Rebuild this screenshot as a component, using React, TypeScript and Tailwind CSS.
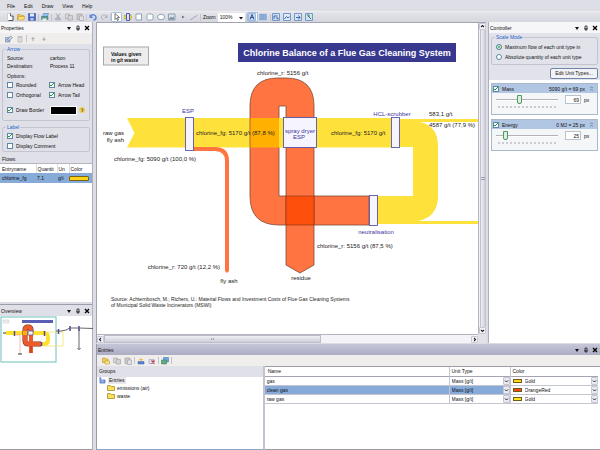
import React from "react";
import type { ReactNode } from "react";

const INK = "#222";

function Icon({ children }: { children: ReactNode }) {
  return (
    <svg viewBox="0 0 16 16" className="block size-[8px]" fill="none" aria-hidden="true">
      {children}
    </svg>
  );
}

const icons = {
  file: <Icon><path d="M3 1h7l4 4v10H3z" fill="#fff" stroke="#a8adbc" /><path d="M9 1v5h5v9H5" stroke="#333" strokeWidth="1.6" /></Icon>,
  open: <Icon><path d="M1 14V3h5l2 2h5v3" fill="#f2c744" stroke="#b08a20" /><path d="M1 14 4 7h12l-3 7z" fill="#ffe07a" stroke="#b08a20" /></Icon>,
  save: <Icon><path d="M1 1h14v14H1z" fill="#4a68c8" stroke="#2c428f" /><path d="M4 1h8v6H4z" fill="#e4ebff" /><path d="M5 10h6v5H5z" fill="#bcc8ec" /></Icon>,
  print: <Icon><path d="M5 1h10l-2 6H3z" fill="#8fc1f0" stroke="#4774a8" /><path d="M1 7h13v6H1z" fill="#5e9c94" stroke="#396b68" /><path d="M3 11h8v4H3z" fill="#e8f5ea" /></Icon>,
  cut: <Icon><path d="m4 1 6 9M12 1 6 10" stroke="#a4a4b0" strokeWidth="2" /><circle cx="5" cy="12" r="2" stroke="#a4a4b0" strokeWidth="2" /><circle cx="11" cy="12" r="2" stroke="#a4a4b0" strokeWidth="2" /></Icon>,
  copy: <Icon><path d="M1 2h8v9H1z" fill="#ddd" stroke="#aaa" strokeWidth="1.5" /><path d="M6 5h9v9H6z" fill="#d2d2d8" stroke="#aaa" strokeWidth="1.5" /></Icon>,
  paste: <Icon><path d="M2 2h10v11H2z" fill="#c8c8ce" stroke="#aaa" strokeWidth="1.5" /><path d="M7 6h8v9H7z" fill="#e2e2e6" stroke="#aaa" strokeWidth="1.5" /></Icon>,
  undo: <Icon><path d="M3 6c4-4 11-3 11 3 0 3-2 5-5 5" stroke="#5b86dd" strokeWidth="3" /><path d="M1 2v8h8z" fill="#5b86dd" /></Icon>,
  redo: <Icon><path d="M13 6C9 2 3 3 3 8c0 3 2 5 4 5" stroke="#b2b2bc" strokeWidth="2" /><path d="M15 3v7H8z" fill="#b2b2bc" /></Icon>,
  pointer: <Icon><path d="m4 1 9 8H9l2 5-2 1-2-5-3 3z" fill="#fff" stroke="#444" strokeWidth="1.4" /></Icon>,
  process: <Icon><path d="M0 5h12V2l4 6-4 6v-3H0z" fill="#eed648" stroke="#a79018" /><path d="M5 1h6v14H5z" fill="#dfe6fb" stroke="#4a5abd" strokeWidth="2" /></Icon>,
  square: <Icon><path d="M2 2h11v12H2z" fill="#fff" stroke="#7892a8" strokeWidth="1.6" /></Icon>,
  rounded: <Icon><rect x="2" y="2" width="12" height="12" rx="3" fill="#fff" stroke="#7892a8" strokeWidth="1.6" /></Icon>,
  ellipse: <Icon><ellipse cx="8" cy="8" rx="7" ry="5.5" fill="#fff" stroke="#7892a8" strokeWidth="1.6" /></Icon>,
  image: <Icon><path d="M1 2h13v12H1z" fill="#d9e2e8" stroke="#7892a8" strokeWidth="1.6" /><path d="m2 12 4-5 3 3 3-4v7H2z" fill="#76909c" /></Icon>,
  dot: <Icon><path d="M6 5v6l5-3z" fill="#666b80" /></Icon>,
  line: <Icon><path d="M1 13c4 0 5-4 8-5s4-3 6-4" stroke="#9a9aa6" strokeWidth="2" /></Icon>,
  fit: <Icon><path d="M1 1h14v14H1z" fill="#c9dcf2" stroke="#5f85bd" /><path d="m4 13 4-10 4 10M5 9h6" stroke="#30538d" strokeWidth="2" /></Icon>,
  grid: <Icon><path d="M1 2h14v12H1z" fill="#7ba1cf" stroke="#8fb1da" /><path d="M1 6h14M1 10h14M6 2v12M11 2v12" stroke="#9dbce2" /></Icon>,
  diagA: <Icon><path d="M1 1h14v14H1z" fill="#cfdff4" stroke="#7398c9" strokeWidth="2" /><path d="M4 12V6h7M8 10h4v3" stroke="#3d679f" strokeWidth="2" /></Icon>,
  diagB: <Icon><path d="M1 1h14v14H1z" fill="#dfeaf9" stroke="#7398c9" strokeWidth="2" /><path d="m3 12 4-5 3 3 3-3" stroke="#3d679f" strokeWidth="2" /></Icon>,
  diagC: <Icon><path d="M1 1h14v14H1z" fill="#d7e5f6" stroke="#7398c9" strokeWidth="2" /><path d="M4 9h8M9 5l3 4-3 4" stroke="#3d679f" strokeWidth="2" /></Icon>,
  diagD: <Icon><path d="M1 1h14v14H1z" fill="#cfe2e8" stroke="#7398c9" strokeWidth="2" /><path d="M4 4h4v4M6 6l6 6" stroke="#3a7d72" strokeWidth="2" /></Icon>,
  edit: <Icon><path d="M1 5h9v9H1z" fill="#a8bdd6" stroke="#5b7796" /><path d="m5 9 6-7 4 3-7 6z" fill="#d3e2f3" stroke="#3c5e88" /></Icon>,
  trash: <Icon><path d="M4 5h8v9H4zM3 3h10" fill="#ddd" stroke="#bbb" strokeWidth="1.6" /></Icon>,
  up: <Icon><path d="m8 4 4 4H9v4H7V8H4z" fill="#aaa" /></Icon>,
  down: <Icon><path d="m8 12 4-4H9V4H7v4H4z" fill="#aaa" /></Icon>,
  newGroup: <Icon><path d="M1 2h5l1 2h5v7H1z" fill="#f3cf4c" stroke="#a98a22" /><path d="M6 8h9v6H6z" fill="#ffe68a" stroke="#a98a22" /></Icon>,
  newEntry: <Icon><path d="M2 9h12v5H2z" fill="#5a86d8" stroke="#3459a5" /><path d="m8 1 1 3 4 1-4 2-1 2-1-2-4-2 4-1z" fill="#f0b840" /></Icon>,
  delEntry: <Icon><path d="M2 5h10v8H2z" fill="#dbe2f4" stroke="#8792bd" /><path d="m7 7 6 6m0-6-6 6" stroke="#c8303a" strokeWidth="2.4" /></Icon>,
  export: <Icon><path d="M5 1h10v9H5z" fill="#6ea4dc" stroke="#3d6fa6" /><path d="M1 6h10v8H1z" fill="#62ad80" stroke="#2f7450" /></Icon>,
};

function Tool({ icon, label, on = false }: { icon: ReactNode; label: string; on?: boolean }) {
  return (
    <button
      aria-label={label}
      className={
        on
          ? "flex h-[10px] w-[11px] items-center justify-center rounded-[1px] border border-[#a9c0dd] bg-white"
          : "flex h-[10px] w-[11px] items-center justify-center"
      }
    >
      {icon}
    </button>
  );
}

function Sep() {
  return <span className="h-[7px] w-[2px] border-r border-[#c3c3cd]" />;
}

function WindowButtons() {
  return (
    <span className="flex items-center gap-[3px]">
      <button aria-label="Window menu" className="size-[6px]">
        <svg viewBox="0 0 6 6" className="block size-[6px]"><path d="M1 2h4L3 5z" fill="#111" /></svg>
      </button>
      <button aria-label="Pin" className="size-[6px]">
        <svg viewBox="0 0 6 6" className="block size-[6px]"><path d="M2 1h2v3H2zM1 4h4M3 4v2" fill="none" stroke="#222" strokeWidth=".8" /></svg>
      </button>
      <button aria-label="Close" className="size-[6px]">
        <svg viewBox="0 0 6 6" className="block size-[6px]"><path d="m1 1 4 4m0-4L1 5" stroke="#000" strokeWidth="1.3" /></svg>
      </button>
    </span>
  );
}

function PanelHead({ title, tone }: { title: string; tone: "light" | "lilac" | "active" }) {
  const bg =
    tone === "light"
      ? "bg-[#f6f6f9]"
      : tone === "lilac"
        ? "bg-[#dfdfe8]"
        : "bg-linear-to-b from-[#c6c6d8] to-[#acacc4]";
  return (
    <div className={"flex h-[11px] shrink-0 items-center justify-between pr-[2px] pl-[1px] " + bg}>
      <h2>{title}</h2>
      <WindowButtons />
    </div>
  );
}

function Check({ label, on = false, hideLabel = false }: { label: string; on?: boolean; hideLabel?: boolean }) {
  return (
    <label className="flex h-[10px] items-center gap-[3px]">
      <span className="relative size-[6px] shrink-0">
        <input
          type="checkbox"
          defaultChecked={on}
          aria-label={hideLabel ? label : undefined}
          className="peer block size-[6px] appearance-none border border-[#5f86a5] bg-white"
        />
        <svg viewBox="0 0 6 6" className="pointer-events-none absolute inset-0 hidden size-[6px] peer-checked:block">
          <path d="m1 3 1 1 3-3" fill="none" stroke="#1f9a35" strokeWidth="1" />
        </svg>
      </span>
      {!hideLabel && <span className="whitespace-nowrap">{label}</span>}
    </label>
  );
}

function Group({ title, children }: { title: string; children: ReactNode }) {
  return (
    <fieldset className="rounded-[2px] border border-[#c4c4d0] px-[4px]">
      <legend className="-ml-px h-[6px] px-px leading-[6px] text-[#2360c8]">{title}</legend>
      {children}
    </fieldset>
  );
}

function Properties() {
  return (
    <section className="flex min-h-0 flex-1 flex-col">
      <PanelHead title="Properties" tone="light" />
      <div className="flex h-[11px] shrink-0 items-center bg-[#efeeec] pl-[3px]">
        <Tool icon={icons.edit} label="Edit" />
        <Tool icon={icons.trash} label="Delete" />
        <Sep />
        <Tool icon={icons.up} label="Move up" />
        <Tool icon={icons.down} label="Move down" />
      </div>
      <div className="flex shrink-0 flex-col gap-[3px] bg-[#e0e0e8] px-[2px] pt-[2px]">
        <Group title="Arrow">
          <dl className="grid grid-cols-[43px_1fr] pt-[2px]">
            <dt>Source:</dt>
            <dd>carbon</dd>
            <dt>Destination:</dt>
            <dd>Process 11</dd>
          </dl>
          <p className="pt-[2px]">Options:</p>
          <div className="grid grid-cols-[42px_1fr]">
            <Check label="Rounded" />
            <Check label="Arrow Head" on />
            <Check label="Orthogonal" />
            <Check label="Arrow Tail" on />
          </div>
          <div className="grid h-[20px] grid-cols-[43px_1fr] items-center">
            <Check label="Draw Border" on />
            <span className="flex items-center justify-between">
              <button aria-label="Border color" className="h-[9px] w-[27px] border border-white bg-black" />
              <button aria-label="Pick color" className="size-[6px]">
                <svg viewBox="0 0 6 6" className="block size-[6px]"><circle cx="3" cy="3" r="3" fill="#e8cf58" /><path d="M2 2h2v1L3 5" fill="none" stroke="#7b6416" strokeWidth=".8" /></svg>
              </button>
            </span>
          </div>
        </Group>
        <Group title="Label">
          <div className="pt-px">
            <Check label="Display Flow Label" on />
            <Check label="Display Comment" />
          </div>
        </Group>
        <h3 className="leading-[8px]">Flows:</h3>
      </div>
      <div className="min-h-0 flex-1 border-t border-[#b5b5c2] bg-white">
        <table className="w-full table-fixed border-collapse">
          <thead>
            <tr className="h-[9px] text-left">
              <th className="w-[36px] border-r border-[#ddd] pl-[2px] font-normal">Entryname</th>
              <th className="w-[21px] border-r border-[#ddd] pl-px font-normal">Quantit</th>
              <th className="w-[12px] border-r border-[#ddd] pl-px font-normal">Un</th>
              <th className="pl-px font-normal">Color</th>
            </tr>
          </thead>
          <tbody>
            <tr className="h-[10px] bg-[#86abd9]">
              <td className="pl-[2px]">chlorine_fg</td>
              <td className="pl-px">7.1</td>
              <td className="pl-px">g/t</td>
              <td className="pr-[3px]">
                <span className="block h-[5px] rounded-[1px] border border-[#7a6310] bg-[#ffd21a]" />
              </td>
            </tr>
          </tbody>
        </table>
      </div>
    </section>
  );
}

function Overview() {
  return (
    <section className="flex h-[146px] shrink-0 flex-col border-t border-[#9c9cab]">
      <PanelHead title="Overview" tone="lilac" />
      <div className="flex-1 border-b border-[#9c9cab] bg-white">
        <svg viewBox="0 315 93 60" className="block h-[60px] w-[93px]" fill="none">
          <rect x="1" y="316" width="55" height="45" stroke="#6cc0bb" />
          <rect x="3" y="319" width="6" height="3" fill="#eee" stroke="#ccc" strokeWidth=".5" />
          <rect x="22" y="319" width="31" height="3" fill="#5a5fb5" />
          <path d="M6 332h38q4 0 4 4v3q0 4-4 4h-3" stroke="#ffe02e" strokeWidth="4" />
          <path d="M48 331h15v14H42" stroke="#f3e46a" strokeWidth=".8" />
          <path d="M31 331v-2q0-3-3-3t-3 3v11q0 3 4 3h12" stroke="#5b2a18" strokeWidth="5" />
          <path d="M31 331v-2q0-3-3-3t-3 3v11q0 3 4 3h12M31 333v19" stroke="#f0592a" strokeWidth="4" />
          <path d="M31 345v7" stroke="#a8391a" strokeWidth="1" />
          <path d="M23 332h4" stroke="#ffae10" strokeWidth="4" />
          <path d="M16 334h4v19" stroke="#f5b09a" strokeWidth=".8" />
          <path d="M3 332h3M18 353h4" stroke="#333" />
          <rect x="28" y="330" width="5" height="4" fill="#f4f3ff" stroke="#54549e" strokeWidth=".7" />
          <path d="M14.500 330v5M44.500 330v5M41.500 341v4M58.500 328v5M70 325v5M79 325v5" stroke="#4c4c94" strokeWidth="1.500" />
          <path d="M56 330h5l5-1 4-2h9l14 .5M79 328v19" stroke="#55555f" strokeWidth=".9" />
          <path d="m77 347 2 2 2-2" fill="#999" stroke="#777" strokeWidth=".6" />
        </svg>
      </div>
    </section>
  );
}

function Diagram() {
  const navy = "#3d369b";
  return (
    <svg viewBox="97 23 381 310" className="block h-[310px] w-[381px]" fontSize="6" fill={INK}>
      <rect x="103.500" y="47" width="45" height="18" fill="#ececec" stroke="#a8a8a8" />
      <g fontSize="5" fontWeight="bold" fill="#111">
        <text x="111" y="56">Values given</text>
        <text x="111" y="62">in g/t waste</text>
      </g>
      <rect x="238" y="43" width="218" height="19" fill="#38388f" />
      <text x="347" y="56" fontSize="9" fontWeight="bold" fill="#fff" textAnchor="middle">
        Chlorine Balance of a Flue Gas Cleaning System
      </text>

      <path d="M127 118h264v29.500H127l7.500-14.500z" fill="#ffe13b" />
      <path d="M399 119h79v3h-58q18 4 18 24v50q0 21-20 25h60v3H377v-28h36v-49h-14z" fill="#ffe13b" />
      <path d="M193 147h22q14 0 14 14v110l-2 2-2-2V161q0-10-10-10h-22z" fill="#ff7441" />
      <g stroke="#7d4a35" strokeWidth=".8">
        <path d="M314 118v-12q0-28-28-28h-8q-28 0-28 28v90q0 29 29 29h90v-29h-90v-90h7v12z" fill="#ff7441" />
        <path d="M286 147v118l14 8 14-8V147z" fill="#ff7441" />
      </g>
      <path d="M250.500 118H279v29.500h-28.500z" fill="#ffb000" />
      <path d="M279 118h7v29.500h-7z" fill="#ffe13b" />
      <path d="M286 196h28v29h-28z" fill="#ff4f0c" stroke="#7d3015" strokeWidth=".6" />
      <g fill="#f5f4ff" stroke="#5858a6" strokeWidth=".9">
        <rect x="185.500" y="117.500" width="8" height="33" />
        <rect x="283.500" y="117.500" width="33" height="30" />
        <rect x="391.500" y="117.500" width="8" height="30" />
        <rect x="369.500" y="195.500" width="8" height="30" />
      </g>

      <text x="257" y="75">chlorine_r: 5156 g/t</text>
      <text x="124" y="135" textAnchor="end">raw gas</text>
      <text x="124" y="142" textAnchor="end">fly ash</text>
      <text x="196" y="135">chlorine_fg: 5170 g/t (87,8 %)</text>
      <text x="331" y="135">chlorine_fg: 5170 g/t</text>
      <text x="429" y="116">583,1 g/t</text>
      <text x="429" y="127">4587 g/t (77,9 %)</text>
      <text x="114" y="161">chlorine_fg: 5090 g/t (100,0 %)</text>
      <text x="220" y="269" textAnchor="end">chlorine_r: 720 g/t (12,2 %)</text>
      <text x="229" y="283" textAnchor="middle">fly ash</text>
      <text x="301" y="280" textAnchor="middle">residue</text>
      <text x="317" y="248">chlorine_r: 5156 g/t (87,5 %)</text>
      <g fill={navy}>
        <text x="182" y="113">ESP</text>
        <text x="392" y="116" textAnchor="middle">HCL-scrubber</text>
        <text x="376" y="234" textAnchor="middle">neutralisation</text>
        <text x="300" y="133" textAnchor="middle">spray dryer</text>
        <text x="299" y="139" textAnchor="middle">ESP</text>
      </g>
      <g fontSize="5">
        <text x="111" y="301">
          Source: Achternbosch, M.; Richers, U.: Material Flows and Investment Costs of Flue Gas Cleaning Systems
        </text>
        <text x="111" y="307">of Municipal Solid Waste Incinerators (MSWI)</text>
      </g>
    </svg>
  );
}

function ScrollButton({ label, d }: { label: string; d: string }) {
  return (
    <button aria-label={label} className="size-[7px] shrink-0 rounded-[1px] border border-[#c8c8d4] bg-[#f4f4f8]">
      <svg viewBox="0 0 5 5" className="block size-[5px]"><path d={d} fill="none" stroke="#222" strokeWidth="1.1" /></svg>
    </button>
  );
}

function Canvas() {
  return (
    <main className="grid min-w-0 flex-1 grid-cols-[minmax(0,1fr)_8px] grid-rows-[minmax(0,1fr)_9px] border-t border-l border-[#a3a3b2] bg-white">
      <div className="overflow-hidden">
        <Diagram />
      </div>
      <div className="flex flex-col items-center border-l border-[#b4b4c0] bg-[#f2f2f7]">
        <ScrollButton label="Scroll up" d="m1 3 1.500-1.500L4 3" />
        <div className="flex w-[6px] flex-1 flex-col items-center justify-center gap-px border-x border-[#c2c2cf] bg-linear-to-r from-[#eeeef4] to-[#cfcfdc]">
          <span className="h-px w-[4px] bg-[#9d9dad]" />
          <span className="h-px w-[4px] bg-[#9d9dad]" />
        </div>
        <ScrollButton label="Scroll down" d="m1 2 1.500 1.500L4 2" />
      </div>
      <div className="flex items-center border-t border-[#b4b4c0] bg-[#f3f3f8]">
        <ScrollButton label="Scroll left" d="M3 1 1.500 2.500 3 4" />
        <div className="flex h-[8px] w-[57%] items-center justify-center border border-[#bcbccb] bg-linear-to-b from-[#eeeef4] to-[#cfcfdc]">
          <span className="h-[2px] w-[3px] border-x border-[#9d9dad]" />
        </div>
        <span className="flex-1" />
        <ScrollButton label="Scroll right" d="m2 1 1.500 1.500L2 4" />
      </div>
      <div className="bg-[#e2e2e8]" />
    </main>
  );
}

function ScaleMode({ label, on = false }: { label: string; on?: boolean }) {
  return (
    <label className="flex h-[10px] items-center gap-[3px] whitespace-nowrap">
      <input
        type="radio"
        name="scale"
        defaultChecked={on}
        className="block size-[6px] shrink-0 appearance-none rounded-full border border-[#5f86a5] bg-white checked:bg-[#35a648] checked:shadow-[inset_0_0_0_1px_white]"
      />
      {label}
    </label>
  );
}

function UnitCard({ name, scale, value, max }: { name: string; scale: string; value: number; max: number }) {
  return (
    <div className="border border-[#a9b9cd] bg-[#f4f6f8]">
      <div className="flex h-[9px] items-center justify-between bg-[#b1c6e3] pr-[3px] pl-px">
        <Check label={name} on />
        <span className="flex items-center gap-[4px]">
          {scale}
          <button aria-label={"Collapse " + name} className="size-[5px]">
            <svg viewBox="0 0 5 5" className="block size-[5px]"><path d="m1 2 1.500-1L4 2M1 4.500l1.500-1 1.500 1" fill="none" stroke="#5d7294" strokeWidth=".7" /></svg>
          </button>
        </span>
      </div>
      <div className="flex h-[21px] items-start gap-[7px] px-[4px] pt-[2px]">
        <div className="flex min-w-0 flex-1 flex-col">
          <input
            type="range"
            aria-label={name + " scale"}
            min={0}
            max={max}
            defaultValue={value}
            className="block h-[9px] w-full appearance-none bg-transparent [&::-webkit-slider-runnable-track]:h-[2px] [&::-webkit-slider-runnable-track]:border-t [&::-webkit-slider-runnable-track]:border-[#b3b3ba] [&::-webkit-slider-runnable-track]:bg-white [&::-webkit-slider-thumb]:-mt-[5px] [&::-webkit-slider-thumb]:h-[9px] [&::-webkit-slider-thumb]:w-[5px] [&::-webkit-slider-thumb]:appearance-none [&::-webkit-slider-thumb]:rounded-b-[2px] [&::-webkit-slider-thumb]:border [&::-webkit-slider-thumb]:border-[#4c9b62] [&::-webkit-slider-thumb]:bg-[#e2ede2]"
          />
          <span className="mx-[2px] mt-[2px] border-t-2 border-dotted border-[#c9ccd0]" />
        </div>
        <label className="flex items-center gap-[3px]">
          <input
            defaultValue={value}
            aria-label={name + " pixels"}
            className="h-[9px] w-[16px] border border-[#b9c3cf] bg-white px-px text-right leading-[7px]"
          />
          <span className="w-[9px]">px</span>
        </label>
      </div>
    </div>
  );
}

function Controller() {
  return (
    <aside className="flex w-[112px] shrink-0 flex-col border-l border-[#b0b0bd] bg-white">
      <PanelHead title="Controller" tone="light" />
      <div className="bg-[#e2e2ea] px-[2px] pt-px pb-px">
        <Group title="Scale Mode">
          <div className="pt-[2px] pb-[2px]">
            <ScaleMode label="Maximum flow of each unit type in" on />
            <ScaleMode label="Absolute quantity of each unit type" />
          </div>
        </Group>
        <div className="flex justify-end pt-[3px]">
          <button className="h-[11px] w-[48px] rounded-[2px] border border-[#6f86a8] bg-[#f3f3f7] leading-[9px]">
            Edit Unit Types...
          </button>
        </div>
      </div>
      <div className="flex flex-col gap-[4px] px-[2px] pt-[3px]">
        <UnitCard name="Mass" scale="5090 g/t = 69 px" value={69} max={190} />
        <UnitCard name="Energy" scale="0 MJ = 25 px" value={25} max={190} />
      </div>
    </aside>
  );
}

function Folder() {
  return (
    <svg viewBox="0 0 8 6" className="block h-[6px] w-[8px]"><path d="M.5 5.500v-5h3l1 1h3v4z" fill="#fbe05a" stroke="#a5882a" strokeWidth=".8" /></svg>
  );
}

function Pick({ label, value, options }: { label: string; value: string; options: string[] }) {
  return (
    <span className="relative flex h-[8px] min-w-0 flex-1">
      <select
        aria-label={label}
        defaultValue={value}
        className="h-[8px] w-full appearance-none bg-transparent p-0 leading-[8px]"
      >
        {options.map((o) => (
          <option key={o}>{o}</option>
        ))}
      </select>
      <span className="pointer-events-none absolute inset-y-0 right-0 w-[7px] rounded-[1px] border border-[#c5c5d3] bg-[#e9e9f1]">
        <svg viewBox="0 0 5 6" className="block h-[6px] w-[5px]"><path d="M1 2.500 2.500 4 4 2.500" fill="none" stroke="#222" /></svg>
      </span>
    </span>
  );
}

const entries = [
  { name: "gas", color: "Gold", swatch: "bg-[#ffd91a]", selected: false },
  { name: "clean gas", color: "OrangeRed", swatch: "bg-[#ff4512]", selected: true },
  { name: "raw gas", color: "Gold", swatch: "bg-[#ffe81a]", selected: false },
];

function Entries() {
  return (
    <section className="flex h-[106px] shrink-0 flex-col border-l border-[#9a9aa9]">
      <PanelHead title="Entries" tone="active" />
      <div className="flex h-[11px] shrink-0 items-center bg-[#efeeec] pl-[3px]">
        <Tool icon={icons.newGroup} label="New group" />
        <Tool icon={icons.copy} label="Edit group" />
        <Tool icon={icons.paste} label="Delete group" />
        <Sep />
        <Tool icon={icons.newEntry} label="New entry" />
        <Tool icon={icons.delEntry} label="Delete entry" />
        <Sep />
        <Tool icon={icons.export} label="Export" />
        <Sep />
      </div>
      <div className="flex min-h-0 flex-1">
        <div className="flex w-1/3 flex-col border-r-2 border-b border-[#c3c3d0] border-b-[#8fa5c8]">
          <h3 className="h-[11px] bg-[#e0e0e8] pl-[2px] leading-[11px]">Groups</h3>
          <ul className="flex-1 bg-white pl-[2px]">
            <li>
              <span className="flex items-center gap-[2px]">
                <svg viewBox="0 0 7 7" className="block size-[7px]"><path d="M1 0v6h5V3H4" fill="#8db2ea" stroke="#3f68b4" strokeWidth=".8" /></svg>
                <span className="bg-[#e8e8ec] px-px leading-[7px]">Entries</span>
              </span>
              <ul className="pl-[8px]">
                <li className="flex items-center gap-[2px]"><Folder />emissions (air)</li>
                <li className="flex items-center gap-[2px]"><Folder />waste</li>
              </ul>
            </li>
          </ul>
        </div>
        <div className="flex-1 border-t border-b border-[#9c9cab] bg-white pr-[2px]">
          <table className="w-full table-fixed border-collapse">
            <thead>
              <tr className="h-[9px] border-b border-[#a5a5b2] text-left">
                <th className="border-r border-[#c5c5cf] pl-[3px] font-normal">Name</th>
                <th className="w-[61px] border-r border-[#c5c5cf] pl-[2px] font-normal">Unit Type</th>
                <th className="w-[88px] pl-[2px] font-normal">Color</th>
              </tr>
            </thead>
            <tbody>
              {entries.map((e) => (
                <tr key={e.name} className="h-[9px] border-b border-[#c5c5cf]">
                  <td className={e.selected ? "border-r border-[#c5c5cf] bg-[#86abd9] pl-[2px]" : "border-r border-[#c5c5cf] pl-[2px]"}>
                    {e.name}
                  </td>
                  <td className={e.selected ? "border-r border-[#c5c5cf] bg-[#86abd9] pl-[2px]" : "border-r border-[#c5c5cf] pl-[2px]"}>
                    <Pick label={e.name + " unit type"} value="Mass [g/t]" options={["Mass [g/t]", "Energy [MJ]"]} />
                  </td>
                  <td className="pl-[2px]">
                    <span className="flex items-center gap-[3px]">
                      <span className={"h-[4px] w-[9px] border border-[#6d5a1a] " + e.swatch} />
                      <Pick label={e.name + " color"} value={e.color} options={["Gold", "OrangeRed"]} />
                    </span>
                  </td>
                </tr>
              ))}
            </tbody>
          </table>
        </div>
      </div>
    </section>
  );
}

export default function App() {
  return (
    <div className="flex h-screen flex-col overflow-hidden bg-[#dcdce4] font-['Liberation_Sans',Arial,sans-serif] text-[5px] leading-[8px] text-[#111]">
      <nav className="flex h-[11px] shrink-0 items-center gap-[9px] bg-[#dedee6] pl-[7px]">
        {["File", "Edit", "Draw", "View", "Help"].map((m) => (
          <button key={m}>{m}</button>
        ))}
      </nav>
      <div className="flex h-[11px] shrink-0 items-center border-t border-[#ececf1] bg-linear-to-b from-[#e4e4ea] to-[#d6d6df] pl-[4px]">
        <Tool icon={icons.file} label="New" />
        <Tool icon={icons.open} label="Open" />
        <Tool icon={icons.save} label="Save" />
        <Sep />
        <Tool icon={icons.print} label="Print" />
        <Sep />
        <Tool icon={icons.cut} label="Cut" />
        <Tool icon={icons.copy} label="Copy" />
        <Tool icon={icons.paste} label="Paste" />
        <Sep />
        <Tool icon={icons.undo} label="Undo" />
        <Tool icon={icons.redo} label="Redo" />
        <Sep />
        <Tool icon={icons.pointer} label="Select" on />
        <Tool icon={icons.process} label="Process" />
        <Tool icon={icons.square} label="Rectangle" />
        <Tool icon={icons.rounded} label="Rounded rectangle" />
        <Tool icon={icons.ellipse} label="Ellipse" />
        <Tool icon={icons.image} label="Image" />
        <Tool icon={icons.dot} label="Node" />
        <Tool icon={icons.line} label="Line" />
        <Sep />
        <label className="flex items-center gap-[2px] pl-[2px]">
          Zoom
          <span className="relative">
            <select className="block h-[9px] w-[27px] appearance-none bg-white pl-[2px] leading-[9px]" defaultValue="100%">
              <option>50%</option>
              <option>100%</option>
              <option>200%</option>
            </select>
            <svg viewBox="0 0 4 4" className="pointer-events-none absolute top-[3px] right-[2px] size-[4px]"><path d="M0 1h4L2 3.500z" fill="#111" /></svg>
          </span>
        </label>
        <Sep />
        <Tool icon={icons.fit} label="Show labels" on />
        <Tool icon={icons.grid} label="Grid" />
        <Sep />
        <Tool icon={icons.diagA} label="Layout one" />
        <Tool icon={icons.diagB} label="Layout two" />
        <Tool icon={icons.diagC} label="Layout three" />
        <Tool icon={icons.diagD} label="Layout four" />
      </div>
      <div className="flex min-h-0 flex-1 gap-[3px]">
        <div className="flex w-[93px] shrink-0 flex-col gap-[2px] border-r border-[#b0b0bd]">
          <Properties />
          <Overview />
        </div>
        <div className="flex min-w-0 flex-1 flex-col gap-px">
          <div className="flex min-h-0 flex-1 gap-[2px]">
            <Canvas />
            <Controller />
          </div>
          <Entries />
        </div>
      </div>
    </div>
  );
}
